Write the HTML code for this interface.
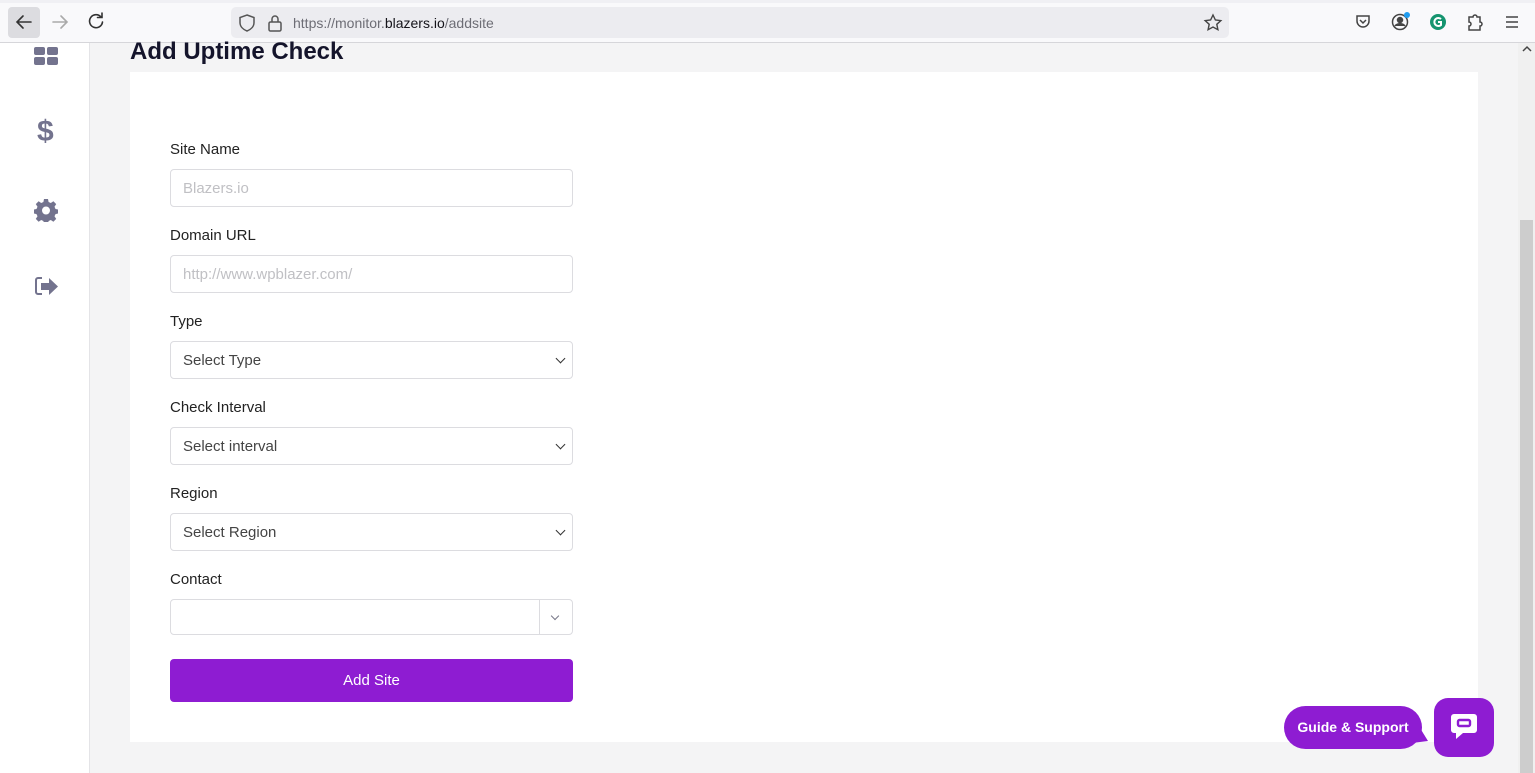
<!DOCTYPE html>
<html><head><meta charset="utf-8"><style>
*{box-sizing:border-box;margin:0;padding:0}
body{width:1535px;height:773px;overflow:hidden;background:#f4f4f5;font-family:"Liberation Sans",sans-serif;position:relative}
.tb{position:absolute;left:0;top:0;width:1535px;height:43px;background:#f9f9fb;border-bottom:1px solid #d6d6da}
.tb .strip{position:absolute;top:0;left:0;right:0;height:3px;background:#f0f0f4}
.url{position:absolute;left:231px;top:7px;width:998px;height:31px;background:#ececf0;border-radius:5px}
.url span{position:absolute;left:62px;top:8px;font-size:14px;color:#6d6d75}
.url b{font-weight:normal;color:#15141a}
.side{position:absolute;left:0;top:43px;width:90px;height:730px;background:#fff;border-right:1px solid #e4e4e7}
h1{position:absolute;left:130px;top:38px;font-size:24px;font-weight:bold;color:#14142b}
.card{position:absolute;left:130px;top:72px;width:1348px;height:670px;background:#fff}
.lab{position:absolute;left:170px;font-size:15px;color:#222}
.inp{position:absolute;left:170px;width:403px;height:38px;border:1px solid #dcdce0;border-radius:4px;background:#fff;font-size:15px;color:#c0c0c4;padding:10px 12px}
.sel{color:#444}
.sel:after{content:"";position:absolute;right:8px;top:13px;width:6px;height:6px;border-right:1.5px solid #333;border-bottom:1.5px solid #333;transform:rotate(45deg)}
.btn{position:absolute;left:170px;top:659px;width:403px;height:43px;background:#8e1cd2;border-radius:4px;color:#fff;font-size:15px;text-align:center;line-height:44px}
.scroll{position:absolute;left:1518px;top:43px;width:17px;height:730px;background:#f0f0f0}
.thumb{position:absolute;left:1520px;top:220px;width:13px;height:553px;background:#cdcdcd}
.guide{position:absolute;left:1284px;top:706px;width:138px;height:43px;background:#8e1cd2;border-radius:22px;color:#fff;font-weight:bold;font-size:14px;line-height:43px;text-align:center}
.chat{position:absolute;left:1434px;top:698px;width:60px;height:59px;background:#8e1cd2;border-radius:14px}
</style></head><body>
<div class="tb"><div class="strip"></div>
<div style="position:absolute;left:8px;top:7px;width:32px;height:31px;background:#dcdce0;border-radius:4px"></div>
<svg style="position:absolute;left:0;top:0" width="120" height="43"><g fill="none" stroke-width="1.6" stroke-linecap="round"><path d="M31 22H17M23 16l-6 6 6 6" stroke="#333"/><path d="M67 22H53M61 16l6 6-6 6" stroke="#aaa"/><path d="M101 17a6.5 6.5 0 1 0 1.5 5M102 13v4.5h-4.5" stroke="#333"/></g></svg>
<div class="url"><svg style="position:absolute;left:6px;top:5px" width="50" height="22" fill="none" stroke="#555" stroke-width="1.5"><path d="M10 3l7 2.5v5c0 4-3 7-7 8.5-4-1.5-7-4.5-7-8.5v-5z"/><rect x="32" y="10" width="12" height="9" rx="1.5"/><path d="M35 10V7a3 3 0 0 1 6 0v3"/></svg><span>https://monitor.<b>blazers.io</b>/addsite</span>
<svg style="position:absolute;left:972px;top:6px" width="20" height="20" fill="none" stroke="#444" stroke-width="1.4"><path d="M10 2l2.4 5 5.4.6-4 3.7 1.1 5.4L10 14l-4.9 2.7 1.1-5.4-4-3.7 5.4-.6z"/></svg></div>
<svg style="position:absolute;left:1350px;top:10px" width="180" height="24" fill="none" stroke="#444" stroke-width="1.5"><path d="M7 6h12v5a6 6 0 0 1-12 0z"/><path d="M10 10l3 3 3-3"/><circle cx="50" cy="12" r="7.5"/><circle cx="50" cy="10" r="2.5" fill="#444"/><path d="M45 16c2-3 8-3 10 0" fill="#444"/><circle cx="57" cy="5" r="3" fill="#1f9cf0" stroke="none"/><circle cx="88" cy="12" r="8" fill="#15946f" stroke="none"/><path d="M91 9a4 4 0 1 0 0 6v-3h-3" stroke="#fff" stroke-width="2"/><path d="M119 7h4a2 2 0 0 1 4 0h3v5a2 2 0 0 1 0 4v4h-11v-4a2 2 0 0 0 0-4z"/><path d="M156 7h12M156 12h12M156 17h12"/></svg>
</div>
<div class="side">
<svg style="position:absolute;left:33px;top:2px" width="28" height="22" fill="#73738e"><rect x="1" y="2" width="11" height="8" rx="2"/><rect x="14" y="2" width="11" height="8" rx="2"/><rect x="1" y="12" width="11" height="8" rx="2"/><rect x="14" y="12" width="11" height="8" rx="2"/></svg>
<div style="position:absolute;left:37px;top:72px;font-size:30px;font-weight:bold;color:#73738e">$</div>
<svg style="position:absolute;left:34px;top:155px" width="24" height="24" viewBox="0 0 24 24"><path fill="#73738e" d="M10 1h4l.6 3 2.2 1 2.6-1.7 2.8 2.8L20.5 8.7l1 2.3 2.5.5v4l-2.5.6-1 2.2 1.7 2.6-2.8 2.8-2.6-1.7-2.2 1-.6 2.5h-4l-.6-2.5-2.2-1-2.6 1.7-2.8-2.8 1.7-2.6-1-2.2L0 15.5v-4l2.5-.5 1-2.3L1.8 6.1l2.8-2.8 2.6 1.7 2.2-1zM12 8.5a4 4 0 1 0 0 8 4 4 0 0 0 0-8z"/></svg>
<svg style="position:absolute;left:34px;top:233px" width="26" height="22"><path d="M8 2H4a2 2 0 0 0-2 2v12a2 2 0 0 0 2 2h4" fill="none" stroke="#73738e" stroke-width="2"/><path fill="#73738e" d="M7 7h8V2l9 8.5-9 8.5v-5H7z"/></svg>
</div>
<h1>Add Uptime Check</h1>
<div class="card"></div>
<div class="lab" style="top:141px">Site Name</div>
<div class="inp" style="top:169px">Blazers.io</div>
<div class="lab" style="top:227px">Domain URL</div>
<div class="inp" style="top:255px">http://www.wpblazer.com/</div>
<div class="lab" style="top:313px">Type</div>
<div class="inp sel" style="top:341px">Select Type</div>
<div class="lab" style="top:399px">Check Interval</div>
<div class="inp sel" style="top:427px">Select interval</div>
<div class="lab" style="top:485px">Region</div>
<div class="inp sel" style="top:513px">Select Region</div>
<div class="lab" style="top:571px">Contact</div>
<div class="inp" style="top:599px;height:36px"><div style="position:absolute;left:368px;top:0;bottom:0;border-left:1px solid #dcdce0"></div><div style="position:absolute;right:14px;top:13px;width:6px;height:6px;border-right:1.3px solid #778;border-bottom:1.3px solid #778;transform:rotate(45deg)"></div></div>
<div class="btn">Add Site</div>
<div class="scroll"></div><div class="thumb"></div>
<svg style="position:absolute;left:1520px;top:44px" width="14" height="10"><path d="M3 7l4-4 4 4" fill="none" stroke="#444" stroke-width="1.5"/></svg>
<div class="guide">Guide &amp; Support</div>
<svg style="position:absolute;left:1412px;top:715px" width="20" height="30"><path d="M0 0L16 26 0 28z" fill="#8e1cd2"/></svg>
<div class="chat"><svg style="position:absolute;left:16px;top:15px" width="28" height="28"><path d="M4 1h20a3 3 0 0 1 3 3v13a3 3 0 0 1-3 3H13l-7 6v-6H4a3 3 0 0 1-3-3V4a3 3 0 0 1 3-3z" fill="#fff"/><rect x="8" y="7" width="12" height="6" rx="1.5" fill="none" stroke="#8e1cd2" stroke-width="2.4"/></svg></div>
</body></html>
